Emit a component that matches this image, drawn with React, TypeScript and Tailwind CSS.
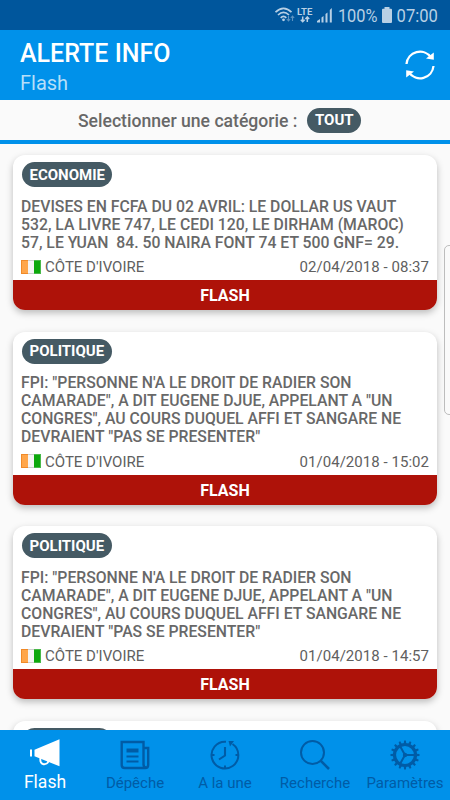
import React from "react";

type Article = { category: string; lines: string[]; date: string };

const politique = [
  'FPI: "PERSONNE N\'A LE DROIT DE RADIER SON',
  'CAMARADE", A DIT EUGENE DJUE, APPELANT A "UN',
  'CONGRES", AU COURS DUQUEL AFFI ET SANGARE NE',
  'DEVRAIENT "PAS SE PRESENTER"',
];

const articles: Article[] = [
  {
    category: "ECONOMIE",
    lines: [
      "DEVISES EN FCFA DU 02 AVRIL: LE DOLLAR US VAUT",
      "532, LA LIVRE 747, LE CEDI 120, LE DIRHAM (MAROC)",
      "57, LE YUAN  84. 50 NAIRA FONT 74 ET 500 GNF= 29.",
    ],
    date: "02/04/2018 - 08:37",
  },
  { category: "POLITIQUE", lines: politique, date: "01/04/2018 - 15:02" },
  { category: "POLITIQUE", lines: politique, date: "01/04/2018 - 14:57" },
];

function StatusBar() {
  return (
    <div className="flex h-[30px] shrink-0 items-center justify-end bg-[#00569c] pr-[12px] text-[#b8d0e5]">
      <svg width="20" height="18" viewBox="0 0 20 18" fill="none" stroke="currentColor" className="mr-[2px]">
        <path d="M0.5 6.2Q8.5-1.500 16.500 6.2M3 9Q8.5 3.500 14 9M5.700 11.900Q8.500 9 11.300 11.900" strokeWidth="1.7" />
        <circle cx="8.500" cy="13.800" r="1.400" fill="currentColor" stroke="none" />
        <path d="M13.500 10v5m-1.700-2 1.700 2 1.700-2M17.500 15v-5m-1.700 2 1.700-2 1.700 2" strokeWidth="1.100" opacity=".5" />
      </svg>
      <div className="mr-[4px] flex w-[16px] flex-col items-center">
        <span className="text-[9.5px] leading-[9px] font-bold">LTE</span>
        <svg width="10" height="7" viewBox="0 0 10 7" fill="none" stroke="currentColor" strokeWidth="1.500">
          <path d="M2.700.5v5M.8 3.700l1.900 2 1.900-2M7.300 6V1M5.400 3l1.900-2 1.900 2" />
        </svg>
      </div>
      <svg width="16" height="16" viewBox="0 0 16 16" fill="currentColor" className="mr-[6px]">
        <path d="M0 15.500V14l3-2v3.500zM4.500 10.500l2-1.500v6.500h-2zM8.500 7l2-1.500v10h-2zM12.800 3l2-2v14.500h-2z" />
      </svg>
      <span className="-ml-[5px] origin-right scale-x-[.91] pt-[2px] text-[18px] leading-[30px]">100%</span>
      <svg width="10" height="16" viewBox="0 0 10 16" fill="currentColor" className="mx-[5px]">
        <path d="M2.500 0h5v1.800H9q1 0 1 1V15q0 1-1 1H1q-1 0-1-1V2.800q0-1 1-1h1.500z" />
      </svg>
      <span className="-ml-[4px] origin-right scale-x-[.92] pt-[2px] text-[18px] leading-[30px]">07:00</span>
    </div>
  );
}

function Header() {
  return (
    <header className="flex h-[70px] shrink-0 items-center justify-between bg-[#0091ea] pr-[14px] pl-[20px]">
      <div className="pt-[5px]">
        <h1 className="text-[25px] leading-[32px] font-medium whitespace-nowrap text-white">ALERTE INFO</h1>
        <p className="text-[20px] leading-[27px] text-[#b5dff9]">Flash</p>
      </div>
      <svg width="32" height="32" viewBox="0 0 32 32" fill="none" stroke="white" strokeWidth="2.300">
        <path d="M2.500 15A13.500 13.500 0 0 1 27 8.500M29.500 17A13.500 13.500 0 0 1 5 23.500" />
        <path d="M29.800 3.500v7.200L22 9.500zM2.200 28.500v-7.200L10 22.500z" fill="white" stroke="none" />
      </svg>
    </header>
  );
}

function Badge({ children }: { children: React.ReactNode }) {
  return (
    <span className="flex h-[25px] items-center rounded-full bg-[#455a64] px-[7.5px] pt-px text-[15px] font-bold text-white">
      {children}
    </span>
  );
}

function Flag() {
  return (
    <span className="flex h-[14px] w-[20px]">
      <span className="flex-1 border border-r-0 border-[#f08a28] bg-[#ffa64a]" />
      <span className="flex-1 border-y border-[#cfcfcf] bg-[#f5f5f5]" />
      <span className="flex-1 border border-l-0 border-[#48b848] bg-[#0ca80c]" />
    </span>
  );
}

function Card({ category, lines, date }: Article) {
  return (
    <article className="mb-[21.5px] shrink-0 overflow-hidden rounded-[12px] bg-white shadow-[0_3px_7px_rgba(0,0,0,0.25)]">
      <div className="flex px-[9px] pt-[7px]">
        <Badge>{category}</Badge>
      </div>
      <div className="px-[8px] pt-[10.5px] text-[15.77px] leading-[18px] font-medium text-[#686868]">
        {lines.map((line) => (
          <p key={line} className="whitespace-pre">{line}</p>
        ))}
      </div>
      <div className="flex h-[28.5px] items-center justify-between px-[8px] pt-[2px] text-[15px] text-[#606060]">
        <div className="flex items-center gap-[4px]">
          <Flag />
          <span className="pt-px">CÔTE D'IVOIRE</span>
        </div>
        <span className="pt-px tracking-[0.04px]">{date}</span>
      </div>
      <div className="flex h-[30px] items-center justify-center bg-[#ae1209] pt-[2px] text-[16px] font-bold text-white">FLASH</div>
    </article>
  );
}

function MegaphoneIcon() {
  return (
    <svg width="32" height="30" viewBox="0 0 32 30" fill="white">
      <path d="M1 10.500h2v7H1zM5.500 10.800 30.500 .300v27L5.500 17.300z" />
      <path d="M11.500 19c-1.500 8 7 7.500 8 3" fill="none" stroke="white" strokeWidth="1.900" />
    </svg>
  );
}

function NewsIcon() {
  return (
    <svg width="30" height="30" viewBox="0 0 30 30" fill="none" stroke="currentColor" strokeWidth="2.400">
      <path d="M23.500 25V2H1.700v23q0 3 3 3h20.500q3 0 3-3V8h-4.700M23.500 24q0 4 3 4" />
      <path d="M6.500 10.500h12" strokeWidth="4" />
      <path d="M6.500 16.500h12M6.500 21.500h12" strokeWidth="2.200" />
    </svg>
  );
}

function ClockIcon() {
  return (
    <svg width="30" height="30" viewBox="0 0 30 30" fill="none" stroke="currentColor" strokeWidth="2">
      <path d="M16 1.700A13.400 13.400 0 1 0 22.500 4" />
      <path d="M15 7v8.500l-6 4" strokeWidth="2.100" />
      <path d="M18.500 1h5.500L20 6.500zM14 25.500h2V28h-2zM2 14h2.500v2H2zM25.500 14H28v2h-2.500z" fill="currentColor" stroke="none" />
    </svg>
  );
}

function SearchIcon() {
  return (
    <svg width="30" height="30" viewBox="0 0 30 30" fill="none" stroke="currentColor" strokeWidth="2">
      <circle cx="12.500" cy="12.500" r="11.500" />
      <path d="m20.500 20.500 8.500 8.500" strokeWidth="2.500" />
    </svg>
  );
}

const teeth = Array.from({ length: 16 }, (_, i) => i * 22.5);

function GearIcon() {
  return (
    <svg width="30" height="30" viewBox="0 0 30 30" fill="none" stroke="currentColor">
      <circle cx="15" cy="15" r="10.500" strokeWidth="3.200" />
      {teeth.map((angle) => (
        <path key={angle} d="M13.700 4 14.100.500h1.800l.4 3.500z" fill="currentColor" stroke="none" transform={`rotate(${angle} 15 15)`} />
      ))}
      <circle cx="15" cy="15" r="2.200" fill="currentColor" stroke="none" />
      <path d="M15 15h10M15 15 10 6M15 15l-5 9" strokeWidth="2" />
    </svg>
  );
}

function Tab({ icon, label, active = false }: { icon: React.ReactNode; label: string; active?: boolean }) {
  return (
    <div className={`flex w-[90px] flex-col items-center ${active ? "pt-[9px] text-white" : "pt-[10px] text-[#005ca6]"}`}>
      <div className="h-[30px]">{icon}</div>
      <span className={active ? "mt-[3px] text-[17.5px] leading-[20px]" : "mt-[3px] text-[15px] leading-[20px] whitespace-nowrap"}>{label}</span>
    </div>
  );
}

export default function App() {
  return (
    <div className="relative flex h-[800px] w-[450px] flex-col overflow-hidden bg-[#fafafa] font-[Roboto,sans-serif]">
      <StatusBar />
      <Header />
      <div className="flex h-[44px] shrink-0 items-center justify-center gap-[10px] border-b-[4px] border-[#0091ea] pr-[11px]">
        <span className="pt-[2px] text-[17.6px] font-medium whitespace-nowrap text-[#686868]">Selectionner une catégorie :</span>
        <Badge>TOUT</Badge>
      </div>
      <main className="flex min-h-0 flex-1 flex-col overflow-hidden px-[13px] pt-[11px]">
        {articles.map((article, i) => (
          <Card key={i} {...article} />
        ))}
        <div className="h-[40px] shrink-0 rounded-t-[12px] bg-white px-[9px] pt-[7px] shadow-[0_3px_7px_rgba(0,0,0,0.25)]">
          <div className="h-[25px] w-[90px] rounded-full bg-[#455a64]" />
        </div>
      </main>
      <nav className="flex h-[70px] shrink-0 bg-[#0091ea]">
        <Tab active icon={<MegaphoneIcon />} label="Flash" />
        <Tab icon={<NewsIcon />} label="Dépêche" />
        <Tab icon={<ClockIcon />} label="A la une" />
        <Tab icon={<SearchIcon />} label="Recherche" />
        <Tab icon={<GearIcon />} label="Paramètres" />
      </nav>
      <div className="absolute top-[245px] right-[-6px] h-[170px] w-[12px] rounded-[5px] border border-[#bdbdbd] bg-[#fafafa]" />
    </div>
  );
}
